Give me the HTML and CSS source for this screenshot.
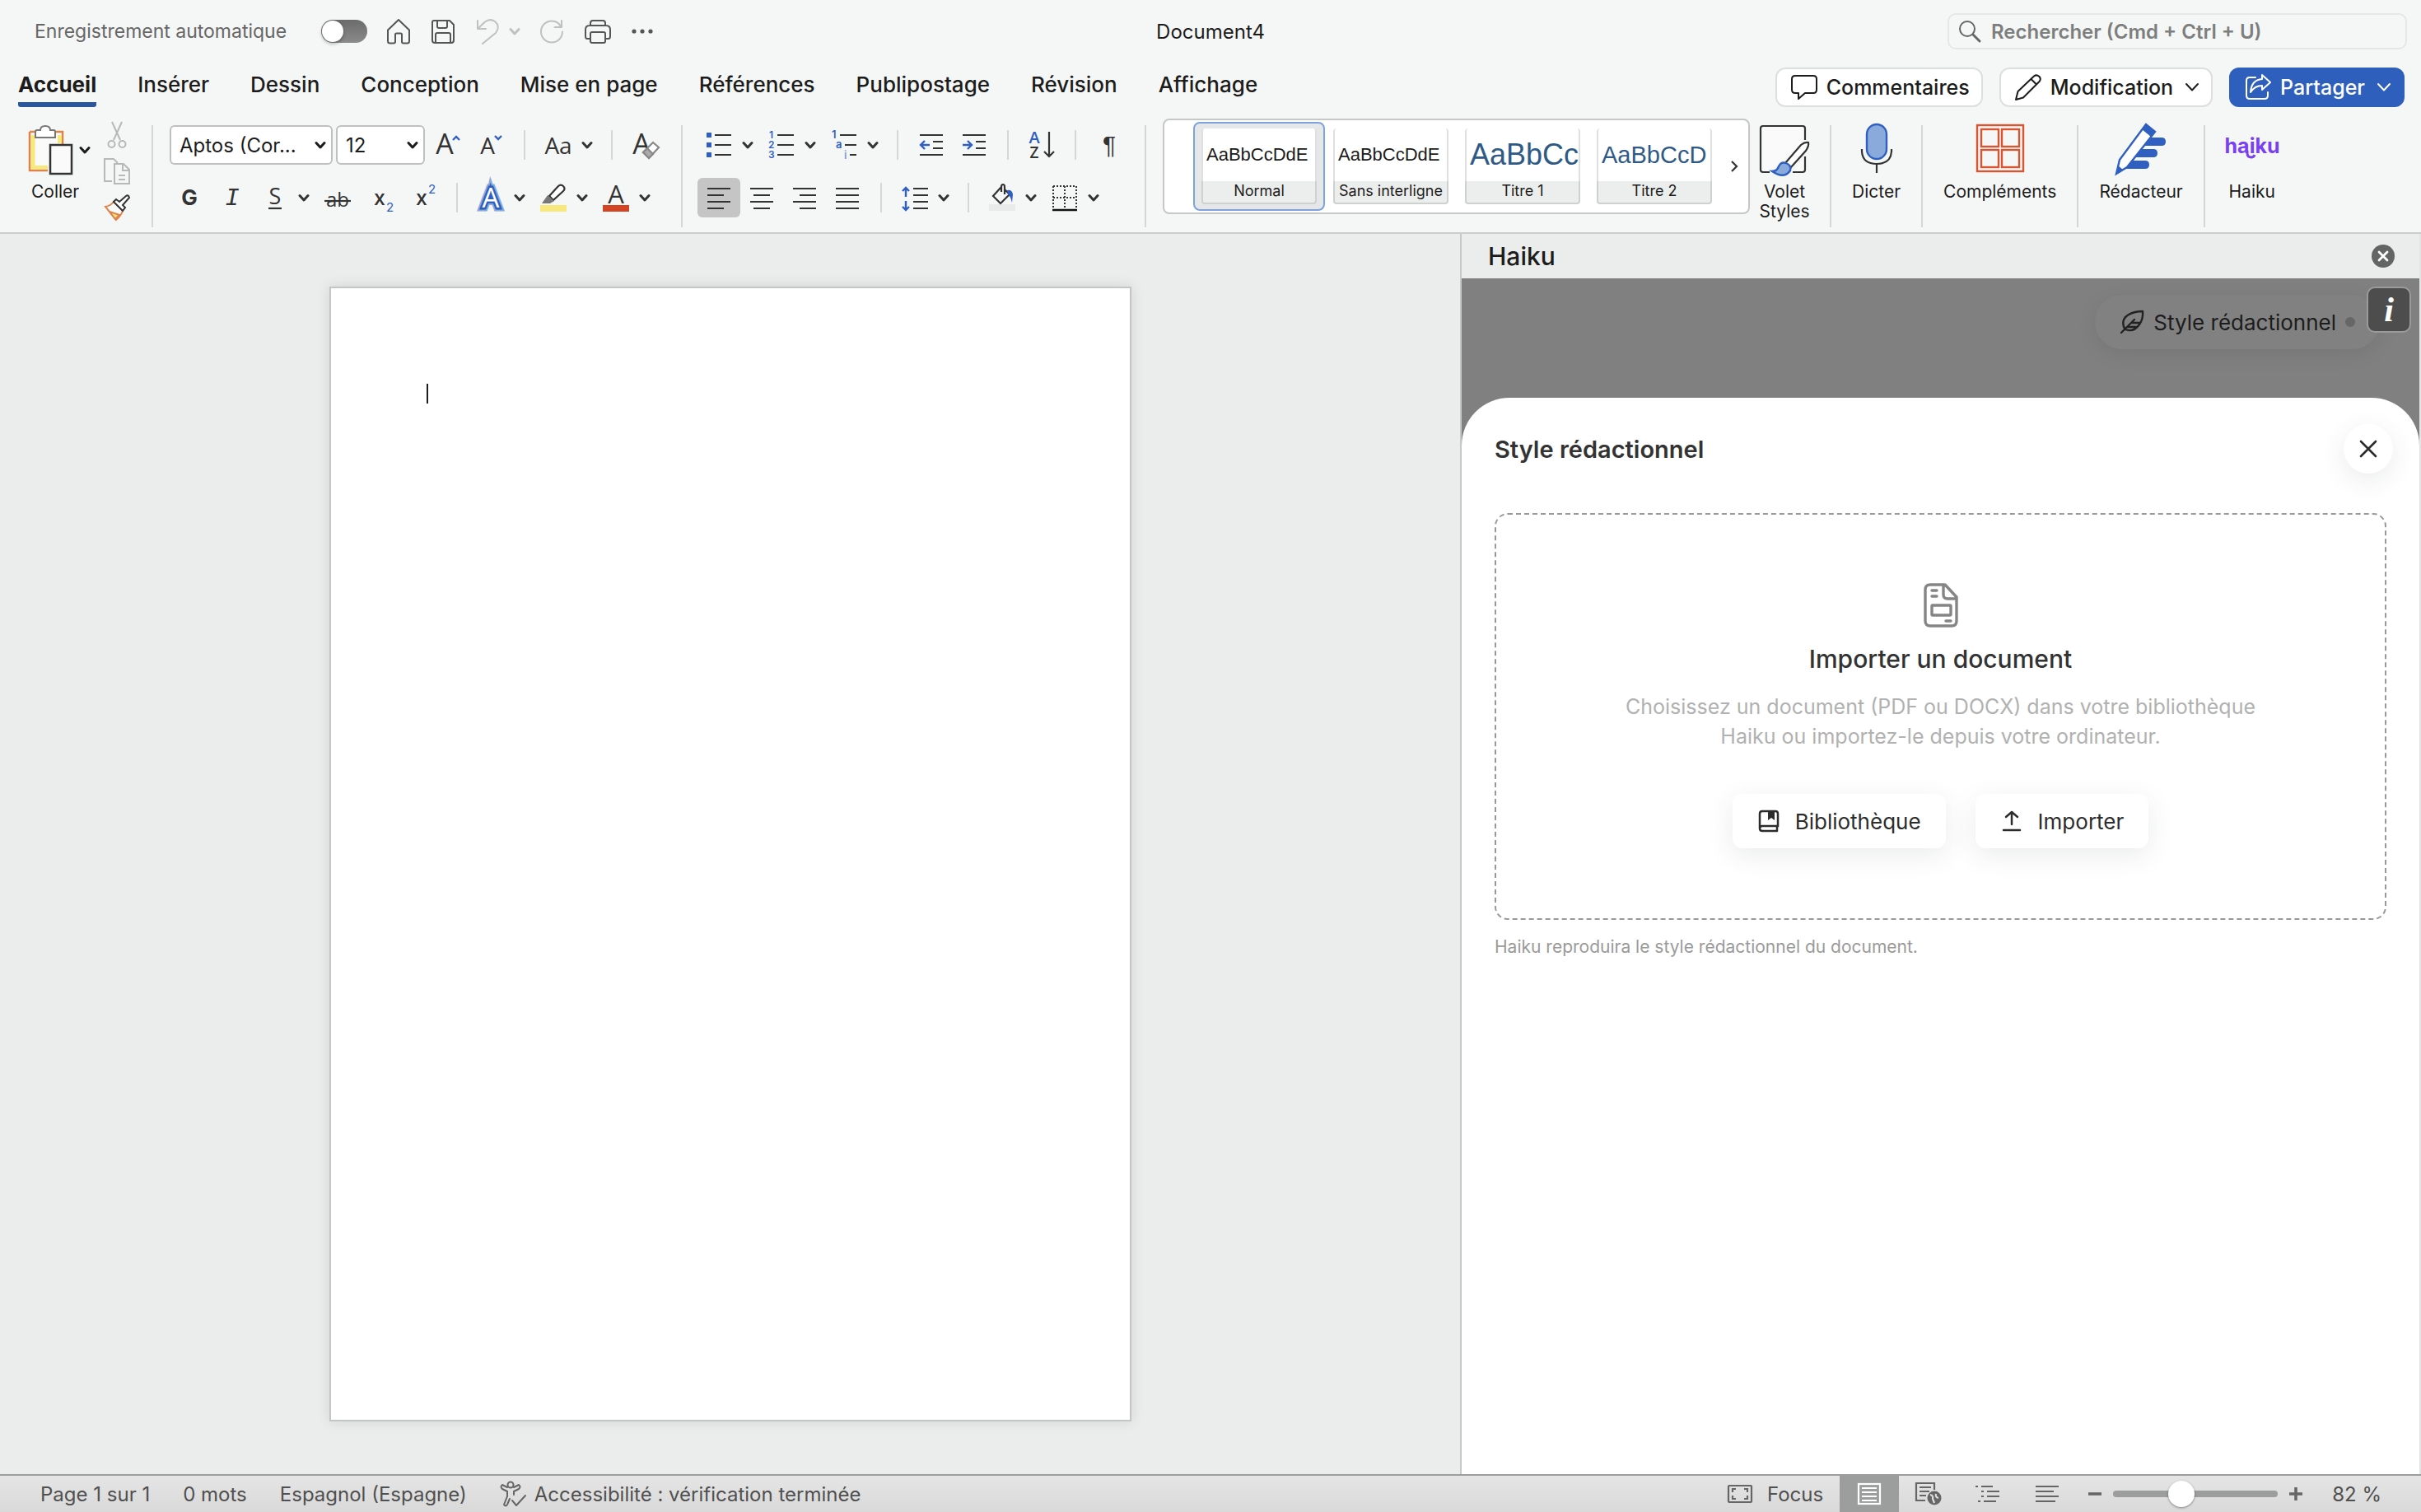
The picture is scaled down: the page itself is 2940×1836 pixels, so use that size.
FILE: index.html
```html
<!DOCTYPE html>
<html lang="fr">
<head>
  <meta charset="UTF-8" />
  <meta name="viewport" content="width=device-width, initial-scale=1.0"/>
  <title>Document4</title>
  <link rel="stylesheet" href="styles.css">
</head>
<body>
  <!-- Shared symbols -->
  <svg class="symbols" aria-hidden="true">
    <symbol id="chevron" viewBox="0 0 14 14"><path d="M2 4.500L7 10L12 4.500" fill="none" stroke="currentColor" stroke-width="3" stroke-linecap="round" stroke-linejoin="round"/></symbol>
    <symbol id="chevron-thin" viewBox="0 0 18 18"><path d="M2 5L9 12.500L16 5" fill="none" stroke="currentColor" stroke-width="2" stroke-linecap="round" stroke-linejoin="round"/></symbol>
  </svg>

  <!-- Title bar -->
  <header class="titlebar">
    <div class="quick">
      <label for="autosave">Enregistrement automatique</label>
      <input type="checkbox" id="autosave" class="toggle" />
      <button class="quick-btn" aria-label="Accueil"><svg width="32" height="32" viewBox="0 0 32 32" class="line"><path d="M3 14.500L16 2L29 14.500V28Q29 30.500 26.500 30.500H22Q20 30.500 20 28.500V20Q20 18.500 18.500 18.500H13.500Q12 18.500 12 20V28.500Q12 30.500 10 30.500H5.500Q3 30.500 3 28Z"/></svg></button>
      <button class="quick-btn" aria-label="Enregistrer"><svg width="32" height="32" viewBox="0 0 32 32" class="line"><path d="M5 3H24L29 8V27Q29 30 26 30H6Q3 30 3 27V5Q3 3 5 3ZM9 3V10Q9 12 11 12H19Q21 12 21 10V3M7 30V20Q7 18 9 18H23Q25 18 25 20V30"/></svg></button>
      <button class="quick-btn off" aria-label="Annuler"><svg width="32" height="32" viewBox="0 0 32 32" class="line"><path d="M4 3V13H14M4 13L13 4.500Q19 0 25 4Q32 10 26 18L10 31"/></svg><svg class="chev" width="14" height="14"><use href="#chevron"/></svg></button>
      <button class="quick-btn off" aria-label="Rétablir"><svg width="32" height="32" viewBox="0 0 32 32" class="line"><path d="M28 3V11H19.500M27.500 11Q24 3.500 16 3.500A13 13 0 1 0 29 16.500"/></svg></button>
      <button class="quick-btn" aria-label="Imprimer"><svg width="36" height="32" viewBox="0 0 36 32" class="line"><path d="M9 9V6Q9 3 12 3H24Q27 3 27 6V9M9 25H5Q3 25 3 22V14Q3 9 8 9H28Q33 9 33 14V22Q33 25 31 25H27M11 17H25Q27 17 27 19V28Q27 30 25 30H11Q9 30 9 28V19Q9 17 11 17Z"/></svg></button>
      <button class="quick-btn" aria-label="Plus"><svg width="28" height="8" viewBox="0 0 28 8" fill="#555"><circle cx="4" cy="4" r="2.600"/><circle cx="14" cy="4" r="2.600"/><circle cx="24" cy="4" r="2.600"/></svg></button>
    </div>
    <h1 class="doc-title">Document4</h1>
    <div class="search">
      <svg width="28" height="28" viewBox="0 0 28 28" class="line"><circle cx="11" cy="11" r="9"/><path d="M18 18L26 26" stroke-width="3"/></svg>
      <input type="text" aria-label="Rechercher" placeholder="Rechercher (Cmd + Ctrl + U)" />
    </div>
  </header>

  <!-- Ribbon tabs -->
  <nav class="tabs">
    <a href="#" class="tab active">Accueil</a>
    <a href="#" class="tab">Insérer</a>
    <a href="#" class="tab">Dessin</a>
    <a href="#" class="tab">Conception</a>
    <a href="#" class="tab">Mise en page</a>
    <a href="#" class="tab">Références</a>
    <a href="#" class="tab">Publipostage</a>
    <a href="#" class="tab">Révision</a>
    <a href="#" class="tab">Affichage</a>
    <div class="tab-actions">
      <button class="action"><svg width="34" height="34" viewBox="0 0 34 34" class="line"><path d="M6 3H28Q32 3 32 7V20Q32 24 28 24H18L10 31V24H6Q2 24 2 20V7Q2 3 6 3Z"/></svg>Commentaires</button>
      <button class="action"><svg width="34" height="34" viewBox="0 0 34 34" class="line"><path d="M2 32L4.500 22L24 3.500Q27 1 30.500 4Q33 7 30.500 10L11 29.500ZM20.500 7L27 13.500"/></svg>Modification<svg class="chev" width="18" height="18"><use href="#chevron-thin"/></svg></button>
      <button class="action primary"><svg width="34" height="34" viewBox="0 0 34 34" class="line"><path d="M14 5H7Q3 5 3 9V27Q3 31 7 31H25Q29 31 29 27V23M22 2L32 11L22 20V15Q13 15 8 23Q9 8 22 7Z"/></svg>Partager<svg class="chev" width="18" height="18"><use href="#chevron-thin"/></svg></button>
    </div>
  </nav>

  <!-- Ribbon -->
  <section class="ribbon">
    <div class="group clipboard">
      <button class="big paste">
        <span class="paste-icon">
          <svg width="54" height="60" viewBox="0 0 54 60"><path d="M2 8H42V24M24 55H2V8" fill="#f9f9f9" stroke="#e0834a" stroke-width="2.500"/><path d="M6 12V51H24M38.500 12V22" fill="none" stroke="#f8e77a" stroke-width="5"/><path d="M9 14H36V22H26V49H9Z" fill="#fafafa"/><path d="M9 15V8Q9 6 11 6H15Q15 1 21 1Q27 1 27 6H31Q33 6 33 8V15Z" fill="#fff" stroke="#777" stroke-width="2"/><rect x="27" y="24" width="26" height="35" fill="#fafafa" stroke="#333" stroke-width="2.500"/></svg>
          <svg class="chev" width="14" height="14"><use href="#chevron"/></svg>
        </span>
        <span class="paste-label">Coller</span>
      </button>
      <div class="stack">
        <button class="small" aria-label="Couper"><svg width="32" height="32" viewBox="0 0 32 32" fill="none" stroke="#b7b8b8" stroke-width="2"><path d="M10 0L20 22M22 0L12 22"/><circle cx="9.500" cy="27" r="4"/><circle cx="22.500" cy="27" r="4"/></svg></button>
        <button class="small" aria-label="Copier"><svg width="32" height="32" viewBox="0 0 32 32" fill="none" stroke="#b7b8b8" stroke-width="2"><path d="M10 28H1V1H12L17 6M13 7H24L31 14V31H13ZM23 7V15H31M18 21H26M18 26H26"/></svg></button>
        <button class="small" aria-label="Reproduire la mise en forme"><svg width="32" height="32" viewBox="0 0 32 32" fill="none" stroke-width="2"><path d="M2 15Q8 14 12 9L23 20Q21 26 15 31Z" fill="#fafafa" stroke="#e0834a"/><path d="M7 21L19 25L14 30Z" fill="#f8e77a" stroke="#e0834a"/><path d="M12 9L15 6L19 9L27 2Q30 0 31 4L23 13L26 16L23 20Z" fill="#fff" stroke="#333"/></svg></button>
      </div>
    </div>

    <div class="divider"></div>

    <div class="group rows">
      <div class="row">
        <span class="select font-name"><select aria-label="Police"><option>Aptos (Cor...</option></select><svg class="chev" width="14" height="14"><use href="#chevron"/></svg></span>
        <span class="select font-size"><select aria-label="Taille"><option>12</option></select><svg class="chev" width="14" height="14"><use href="#chevron"/></svg></span>
        <button class="tool" aria-label="Agrandir la police"><svg width="32" height="32" viewBox="0 0 32 32"><text x="12" y="27" text-anchor="middle" class="glyph letter" font-size="34">A</text><path d="M22 10L26 6L30 10" class="blue"/></svg></button>
        <button class="tool" aria-label="Réduire la police"><svg width="32" height="32" viewBox="0 0 32 32"><text x="12" y="27" text-anchor="middle" class="glyph letter" font-size="28">A</text><path d="M21 5L25 9L29 5" class="blue"/></svg></button>
        <span class="sep"></span>
        <button class="tool" aria-label="Modifier la casse"><svg width="32" height="32" viewBox="0 0 32 32"><text x="16" y="27" text-anchor="middle" class="glyph letter" font-size="28">Aa</text></svg><svg class="chev" width="14" height="14"><use href="#chevron"/></svg></button>
        <span class="sep"></span>
        <button class="tool" aria-label="Effacer la mise en forme"><svg width="32" height="32" viewBox="0 0 32 32"><text x="11" y="27" text-anchor="middle" class="glyph letter" font-size="34">A</text><path d="M13 25L25 13L32 19L20 32Z" fill="#fff" stroke="#888" stroke-width="2.200"/><path d="M13 25L18 20L25 27L20 32Z" fill="#aaa" stroke="#888" stroke-width="2.200"/></svg></button>
      </div>
      <div class="row">
        <button class="tool" aria-label="Gras"><svg width="32" height="32" viewBox="0 0 32 32"><text x="16" y="25" text-anchor="middle" class="glyph" font-size="26" font-weight="700">G</text></svg></button>
        <button class="tool" aria-label="Italique"><svg width="32" height="32" viewBox="0 0 32 32"><text x="16" y="25" text-anchor="middle" class="glyph italic" font-size="29">I</text></svg></button>
        <button class="tool" aria-label="Souligné"><svg width="32" height="32" viewBox="0 0 32 32"><text x="16" y="24" text-anchor="middle" class="glyph letter" font-size="27">S</text><path d="M8 29H24" class="ink"/></svg><svg class="chev" width="14" height="14"><use href="#chevron"/></svg></button>
        <button class="tool" aria-label="Barré"><svg width="32" height="32" viewBox="0 0 32 32"><text x="16" y="27" text-anchor="middle" class="glyph letter" font-size="24">ab</text><path d="M0 20H32" class="ink"/></svg></button>
        <button class="tool" aria-label="Indice"><svg width="32" height="32" viewBox="0 0 32 32"><text x="8" y="25" class="glyph" font-size="25" font-weight="500">x</text><text x="23" y="33" class="glyph tint" font-size="15">2</text></svg></button>
        <button class="tool" aria-label="Exposant"><svg width="32" height="32" viewBox="0 0 32 32"><text x="7" y="25" class="glyph" font-size="25" font-weight="500">x</text><text x="22" y="11" class="glyph tint" font-size="15">2</text></svg></button>
        <span class="sep"></span>
        <button class="tool" aria-label="Effets de texte"><svg width="32" height="32" viewBox="0 0 32 32"><text x="16" y="28" text-anchor="middle" class="letter halo" font-size="33">A</text><text x="16" y="28" text-anchor="middle" class="letter outline" font-size="33">A</text></svg><svg class="chev" width="14" height="14"><use href="#chevron"/></svg></button>
        <button class="tool" aria-label="Surlignage"><svg width="32" height="34" viewBox="0 0 32 34"><path d="M11 15L22 3Q25 0 28 3Q31 6 28 9L16 20Z" fill="#fff" stroke="#333" stroke-width="2.200"/><path d="M9 14L17 21L12 24H2Z" fill="#777"/><rect y="26" width="32" height="8" fill="#f8e77a"/></svg><svg class="chev" width="14" height="14"><use href="#chevron"/></svg></button>
        <button class="tool" aria-label="Couleur de police"><svg width="32" height="34" viewBox="0 0 32 34"><text x="16" y="24" text-anchor="middle" class="glyph letter" font-size="31">A</text><rect y="26" width="32" height="8" fill="#d24424"/></svg><svg class="chev" width="14" height="14"><use href="#chevron"/></svg></button>
      </div>
    </div>

    <div class="divider"></div>

    <div class="group rows">
      <div class="row">
        <button class="tool" aria-label="Puces"><svg width="32" height="32" viewBox="0 0 32 32"><path d="M11 4H31M11 16H31M11 28H31" class="ink"/><path d="M1 1H7V7H1ZM1 13H7V19H1ZM1 25H7V31H1Z" fill="#2f5fc0"/></svg><svg class="chev" width="14" height="14"><use href="#chevron"/></svg></button>
        <button class="tool" aria-label="Numérotation"><svg width="32" height="32" viewBox="0 0 32 32"><path d="M11 4H31M11 16H31M11 28H31" class="ink"/><g class="glyph tint" font-size="12" font-weight="600"><text x="1" y="8">1</text><text x="0" y="20">2</text><text x="0" y="32">3</text></g></svg><svg class="chev" width="14" height="14"><use href="#chevron"/></svg></button>
        <button class="tool" aria-label="Liste à plusieurs niveaux"><svg width="32" height="32" viewBox="0 0 32 32"><path d="M11 4H31M17 16H31M23 28H31" class="ink"/><g class="glyph tint" font-size="13" font-weight="600"><text x="1" y="8">1</text><text x="6" y="20">a</text><text x="16" y="33" opacity=".6">i</text></g></svg><svg class="chev" width="14" height="14"><use href="#chevron"/></svg></button>
        <span class="sep"></span>
        <button class="tool" aria-label="Diminuer le retrait"><svg width="32" height="32" viewBox="0 0 32 32"><path d="M2 4H30M18 12H30M18 20H30M2 28H30" class="ink"/><path d="M14 16H3M8 11L3 16L8 21" class="blue"/></svg></button>
        <button class="tool" aria-label="Augmenter le retrait"><svg width="32" height="32" viewBox="0 0 32 32"><path d="M2 4H30M18 12H30M18 20H30M2 28H30" class="ink"/><path d="M2 16H13M8 11L13 16L8 21" class="blue"/></svg></button>
        <span class="sep"></span>
        <button class="tool" aria-label="Trier"><svg width="32" height="34" viewBox="0 0 32 34"><text x="7" y="15" text-anchor="middle" class="letter tint" font-size="20" font-weight="600">A</text><text x="7" y="33" text-anchor="middle" class="letter glyph" font-size="19" font-weight="600">Z</text><path d="M25 1V31M19 25L25 31L31 25" class="ink"/></svg></button>
        <span class="sep"></span>
        <button class="tool" aria-label="Afficher tout"><svg width="32" height="32" viewBox="0 0 32 32"><text x="16" y="26" text-anchor="middle" class="glyph pilcrow" font-size="30">¶</text></svg></button>
      </div>
      <div class="row">
        <button class="tool on" aria-label="Aligner à gauche"><svg width="32" height="32" viewBox="0 0 32 32"><path d="M2 5H30M2 13H22M2 21H30M2 29H22" class="ink"/></svg></button>
        <button class="tool" aria-label="Centrer"><svg width="32" height="32" viewBox="0 0 32 32"><path d="M2 5H30M6 13H26M2 21H30M6 29H26" class="ink"/></svg></button>
        <button class="tool" aria-label="Aligner à droite"><svg width="32" height="32" viewBox="0 0 32 32"><path d="M2 5H30M10 13H30M2 21H30M10 29H30" class="ink"/></svg></button>
        <button class="tool" aria-label="Justifier"><svg width="32" height="32" viewBox="0 0 32 32"><path d="M2 5H30M2 13H30M2 21H30M2 29H30" class="ink"/></svg></button>
        <span class="sep"></span>
        <button class="tool" aria-label="Interligne"><svg width="32" height="32" viewBox="0 0 32 32"><path d="M14 5H32M14 13H32M14 21H32M14 29H32" class="ink"/><path d="M5 15V4M1 8L5 4L9 8M5 20V31M1 27L5 31L9 27" class="blue"/></svg><svg class="chev" width="14" height="14"><use href="#chevron"/></svg></button>
        <span class="sep"></span>
        <button class="tool" aria-label="Trame de fond"><svg width="32" height="32" viewBox="0 0 32 32"><rect y="24" width="32" height="8" fill="#e9ebea"/><path d="M15 3L5 14L14 23L25 12L19 6M15 9V3Q15 0 17 0Q19 0 19 3V12" fill="none" stroke="#333" stroke-width="2.200"/><path d="M22 7Q28 6 29 12L28 22Q26 14 23 12Z" fill="#2f5fc0"/></svg><svg class="chev" width="14" height="14"><use href="#chevron"/></svg></button>
        <button class="tool" aria-label="Bordures"><svg width="32" height="32" viewBox="0 0 32 32"><path d="M2 2H30M2 16H30M2 2V28M16 2V28M30 2V28" fill="none" stroke="#333" stroke-width="2" stroke-dasharray="2 2"/><path d="M1 31H31" stroke="#111" stroke-width="2.500"/></svg><svg class="chev" width="14" height="14"><use href="#chevron"/></svg></button>
      </div>
    </div>

    <div class="divider"></div>

    <!-- Styles gallery -->
    <div class="gallery">
      <button class="style-card selected"><span class="preview">AaBbCcDdE</span><span class="style-name">Normal</span></button>
      <button class="style-card"><span class="preview">AaBbCcDdE</span><span class="style-name">Sans interligne</span></button>
      <button class="style-card"><span class="preview heading-1">AaBbCc</span><span class="style-name">Titre 1</span></button>
      <button class="style-card"><span class="preview heading-2">AaBbCcD</span><span class="style-name">Titre 2</span></button>
      <button class="gallery-next" aria-label="Suivant"><svg width="14" height="16" viewBox="0 0 14 16"><path d="M4 2L10 8L4 14" class="ink"/></svg></button>
    </div>

    <button class="big pane-btn">
      <svg width="60" height="62" viewBox="0 0 60 62"><path d="M12 57H4Q1 57 1 54V4Q1 1 4 1H52Q55 1 55 4V18M55 38V54Q55 57 52 57H40" fill="#fafafa" stroke="#333" stroke-width="2.200"/><path d="M31 46L50 24Q55 20 59 21Q60 25 56 31L38 51Z" fill="#fff" stroke="#333" stroke-width="2.200"/><path d="M15 56Q21 56 23 50Q26 44 32 46Q39 49 37 55Q30 66 15 56Z" fill="#8aaadb" stroke="#2f5fc0" stroke-width="2.400"/></svg>
      Volet<br>Styles
    </button>
    <div class="divider"></div>
    <button class="big">
      <svg width="40" height="62" viewBox="0 0 40 62"><rect x="8" y="1" width="24" height="42" rx="12" fill="#8aaadb" stroke="#2f5fc0" stroke-width="2.400"/><path d="M2 31V34Q3 49 20 49Q37 49 38 34V31M20 49V60" class="ink"/></svg>
      Dicter
    </button>
    <div class="divider"></div>
    <button class="big">
      <svg width="60" height="62" viewBox="0 0 60 62" fill="none" stroke="#d65532" stroke-width="2.400"><rect x="2" y="2" width="56" height="56"/><rect x="7" y="7" width="21" height="21"/><rect x="32" y="7" width="21" height="21"/><rect x="7" y="32" width="21" height="21"/><rect x="32" y="32" width="21" height="21"/></svg>
      Compléments
    </button>
    <div class="divider"></div>
    <button class="big">
      <svg width="62" height="62" viewBox="0 0 62 62"><path d="M38 17H56Q61 17 61 22Q61 27 56 27H30ZM28 31H46Q51 31 51 36Q51 41 46 41H20ZM18 45H36Q41 45 41 50Q41 55 36 55H10Z" fill="#2f5fc0"/><path d="M1 61L5 44L37 1L48 10L14 53Z" fill="#fff" stroke="#2f5fc0" stroke-width="2.400"/><path d="M37 1L48 10L43 16L32 7ZM1 61L3 51L9 56Z" fill="#2f5fc0"/></svg>
      Rédacteur
    </button>
    <div class="divider"></div>
    <button class="big">
      <svg width="64" height="62" viewBox="0 0 64 62"><text x="32" y="36" text-anchor="middle" class="logo-text">haiku</text><path d="M26 33V36Q26 41 31 41Q34 41 35 38" fill="none" stroke="#7a3ff0" stroke-width="3"/></svg>
      Haiku
    </button>
  </section>

  <!-- Document and side pane -->
  <main class="workspace">
    <div class="canvas">
      <div class="page"><div class="caret"></div></div>
    </div>

    <aside class="pane">
      <div class="pane-header">
        <h2>Haiku</h2>
        <button class="pane-close" aria-label="Fermer le volet"><svg width="28" height="28" viewBox="0 0 28 28"><circle cx="14" cy="14" r="14" fill="#636564"/><path d="M9 9L19 19M19 9L9 19" stroke="#fff" stroke-width="2.800" stroke-linecap="round"/></svg></button>
      </div>
      <div class="backdrop">
        <button class="pill">
          <svg width="30" height="30" viewBox="0 0 30 30" fill="none" stroke="#222" stroke-width="2.400" stroke-linecap="round" stroke-linejoin="round"><path d="M2 28L18 12M6 23Q1 12 11 6Q18 2 28 2Q29 11 24 18Q17 28 7 24ZM14 16H24M10 21H20"/></svg>
          Style rédactionnel
          <span class="dot"></span>
        </button>
        <button class="info" aria-label="Informations">i</button>
      </div>
      <div class="sheet">
        <div class="sheet-header">
          <h3>Style rédactionnel</h3>
          <button class="sheet-close" aria-label="Fermer"><svg width="22" height="22" viewBox="0 0 22 22"><path d="M2 2L20 20M20 2L2 20" stroke="#2c2c2c" stroke-width="2.600" stroke-linecap="round"/></svg></button>
        </div>
        <div class="dropzone">
          <svg width="42" height="54" viewBox="0 0 42 54" fill="none" stroke="#858585" stroke-width="3.400" stroke-linejoin="round" stroke-linecap="round"><path d="M8 2H26L40 17V46Q40 52 34 52H8Q2 52 2 46V8Q2 2 8 2ZM24 3V14Q24 19 29 19H39M10 9H16M10 16H16M27 46H33"/><rect x="10" y="27" width="23" height="12" rx="1"/></svg>
          <h4>Importer un document</h4>
          <p>Choisissez un document (PDF ou DOCX) dans votre bibliothèque<br>Haiku ou importez-le depuis votre ordinateur.</p>
          <div class="dropzone-actions">
            <button class="soft"><svg width="28" height="28" viewBox="0 0 28 28"><path d="M6 2H22Q25 2 25 5V20H6Q3 20 3 23V5Q3 2 6 2ZM3 23Q3 26 6 26H24M24 20V26" fill="none" stroke="#2c2c2c" stroke-width="2.500" stroke-linecap="round"/><path d="M13 2H21V13L17 10L13 13Z" fill="#2c2c2c"/></svg>Bibliothèque</button>
            <button class="soft"><svg width="28" height="28" viewBox="0 0 28 28"><path d="M14 18V3M7 9L14 3L21 9M4 25H24" fill="none" stroke="#2c2c2c" stroke-width="2.500" stroke-linecap="round" stroke-linejoin="round"/></svg>Importer</button>
          </div>
        </div>
        <p class="hint">Haiku reproduira le style rédactionnel du document.</p>
      </div>
    </aside>
  </main>

  <!-- Status bar -->
  <footer class="status">
    <span>Page 1 sur 1</span>
    <span>0 mots</span>
    <span>Espagnol (Espagne)</span>
    <span class="with-icon"><svg width="32" height="32" viewBox="0 0 32 32" fill="none" stroke="#666" stroke-width="2" stroke-linecap="round" stroke-linejoin="round"><circle cx="13" cy="5" r="3.500"/><path d="M9 8L3 5Q0 7 3 10L9 13V19L5 29Q7 32 9 29L12 22M17 8L23 5Q26 7 23 10L17 13V17M15 24L20 30L31 18"/></svg>Accessibilité : vérification terminée</span>
    <div class="status-right">
      <button class="focus"><svg width="30" height="24" viewBox="0 0 30 24" fill="none" stroke="#666" stroke-width="2.200"><rect x="1" y="2" width="28" height="20" rx="1"/><path d="M6 10V6H10M20 6H24V10M24 14V18H20M10 18H6V14"/></svg>Focus</button>
      <button class="view on" aria-label="Page"><svg width="28" height="28" viewBox="0 0 28 28" fill="none" stroke="#fff" stroke-width="2.200"><rect x="1" y="2" width="26" height="24"/><path d="M5 7H23M5 12H23M5 17H23M5 22H23"/></svg></button>
      <button class="view" aria-label="Web"><svg width="32" height="30" viewBox="0 0 32 30" fill="none" stroke="#666" stroke-width="2.200"><path d="M12 23H1V2H23V10M5 7H19M5 12H17M5 17H13"/><circle cx="23" cy="20" r="8.500" fill="#666" stroke="none"/><path d="M18 16Q22 17 21 21L23 26M25 15Q24 19 28 20" stroke="#ddd"/></svg></button>
      <button class="view" aria-label="Plan"><svg width="32" height="28" viewBox="0 0 32 28" stroke="#666" stroke-width="2.200"><path d="M1 5H4M8 5H22M8 11H11M15 11H30M8 17H11M15 17H30M4 23H7M11 23H26"/></svg></button>
      <button class="view" aria-label="Brouillon"><svg width="32" height="28" viewBox="0 0 32 28" stroke="#666" stroke-width="2.200"><path d="M2 5H30M2 11H24M2 17H30M2 23H26"/></svg></button>
      <button class="zoom-btn" aria-label="Zoom arrière"><svg width="16" height="16" viewBox="0 0 16 16" stroke="#666" stroke-width="3.600"><path d="M0 8H16"/></svg></button>
      <input type="range" class="zoom" min="0" max="100" value="40" aria-label="Zoom" />
      <button class="zoom-btn" aria-label="Zoom avant"><svg width="16" height="16" viewBox="0 0 16 16" stroke="#666" stroke-width="3.600"><path d="M0 8H16M8 0V16"/></svg></button>
      <span class="zoom-value">82 %</span>
    </div>
  </footer>
</body>
</html>
```

FILE: styles.css
```css
/* Base Styles */
* {
  box-sizing: border-box;
}
body {
  margin: 0;
  height: 100vh;
  display: flex;
  flex-direction: column;
  font-family: Inter, "Liberation Sans", sans-serif;
  font-size: 22px;
  color: #1c1c1c;
  background: #f5f7f6;
  overflow: hidden;
}
h1, h2, h3, h4, p {
  margin: 0;
}
button, input, select {
  font: inherit;
  color: inherit;
  margin: 0;
}
button {
  padding: 0;
  border: none;
  background: none;
  cursor: pointer;
}
svg {
  display: block;
  flex: none;
  overflow: visible;
}
.symbols {
  position: absolute;
  width: 0;
  height: 0;
}
.line {
  fill: none;
  stroke: currentColor;
  stroke-width: 2;
  stroke-linecap: round;
  stroke-linejoin: round;
}
.ink {
  fill: none;
  stroke: #333;
  stroke-width: 2.2;
}
.blue {
  fill: none;
  stroke: #2f5fc0;
  stroke-width: 2.4;
}

/* Letters used inside ribbon icons */
.glyph {
  fill: #333;
}
.tint {
  fill: #2f5fc0;
}
.letter {
  font-family: "Open Sans", "Noto Sans", sans-serif;
}
.italic {
  font-family: "Liberation Mono", monospace;
  font-style: italic;
}
.pilcrow {
  font-family: "Liberation Sans", sans-serif;
}
.halo {
  fill: #8aaadb;
  stroke: #8aaadb;
  stroke-width: 9;
}
.outline {
  fill: #fff;
  stroke: #2f5fc0;
  stroke-width: 5;
  paint-order: stroke;
}

/* Title bar */
.titlebar {
  display: grid;
  grid-template-columns: 1fr auto 1fr;
  align-items: center;
  height: 76px;
  padding: 0 17px;
}
.quick {
  display: flex;
  align-items: center;
  gap: 22px;
  padding-left: 25px;
  color: #666;
  font-size: 23px;
}
.toggle {
  appearance: none;
  width: 56px;
  height: 28px;
  margin-left: 20px;
  border-radius: 14px;
  background: linear-gradient(#6b6b6b, #8b8b8b);
  display: flex;
}
.toggle::before {
  content: "";
  width: 26px;
  height: 26px;
  margin: 1px;
  border-radius: 50%;
  background: #fff;
  box-shadow: 0 2px 4px rgba(0, 0, 0, 0.3);
}
.quick-btn {
  display: flex;
  align-items: center;
  gap: 10px;
  color: #555;
}
.quick-btn.off {
  color: #bfc0c0;
}
.doc-title {
  font-size: 24px;
  font-weight: 400;
}
.search {
  justify-self: end;
  display: flex;
  align-items: center;
  gap: 10px;
  width: 558px;
  height: 44px;
  padding: 0 11px;
  border: 2px solid #e5e7e6;
  border-radius: 10px;
  color: #666;
}
.search input {
  flex: 1;
  border: none;
  outline: none;
  background: none;
  font-weight: 600;
  font-size: 24px;
}
.search input::placeholder {
  color: #7d7f7e;
}

/* Tabs */
.tabs {
  display: flex;
  align-items: flex-start;
  gap: 50px;
  height: 68px;
  padding: 6px 20px 0 22px;
}
.tab {
  height: 48px;
  padding-top: 4px;
  line-height: 34px;
  font-size: 26px;
  font-weight: 500;
  color: #1c1c1c;
  text-decoration: none;
}
.tab.active {
  font-weight: 700;
  border-bottom: 6px solid #2b579a;
  border-radius: 3px;
}
.tab-actions {
  display: flex;
  gap: 20px;
  margin-left: auto;
}
.action {
  display: flex;
  align-items: center;
  gap: 10px;
  height: 48px;
  padding: 0 14px 0 16px;
  border: 2px solid #dddfde;
  border-radius: 12px;
  background: #fff;
  font-size: 25px;
  font-weight: 500;
}
.action .chev {
  margin-left: 4px;
}
.action.primary {
  border-color: #2f5fbd;
  background: #2f5fbd;
  color: #fff;
}

/* Ribbon */
.ribbon {
  display: flex;
  align-items: flex-start;
  height: 140px;
  border-bottom: 2px solid #cbcdcc;
}
.divider {
  width: 2px;
  height: 124px;
  margin-top: 8px;
  background: #d5d7d6;
}
.clipboard {
  display: flex;
  gap: 16px;
  padding: 0 26px 0 34px;
}
.stack {
  display: flex;
  flex-direction: column;
  gap: 4px;
}
.small {
  height: 40px;
}
.big {
  display: flex;
  flex-direction: column;
  align-items: center;
  padding: 6px 25px 0;
  line-height: 24px;
  font-size: 21px;
}
.big > svg,
.paste-icon {
  margin-bottom: 9px;
}
.paste {
  align-items: flex-start;
  padding: 8px 0 0;
}
.paste-icon {
  display: flex;
  align-items: center;
  gap: 8px;
}
.paste-label {
  padding-left: 4px;
}
.pane-btn {
  width: 60px;
  margin: 0 25px 0 12px;
  padding: 8px 0 0;
}
.pane-btn > svg {
  margin-bottom: 7px;
}
.rows {
  display: flex;
  flex-direction: column;
  gap: 16px;
  padding: 8px 17px 0 18px;
}
.row {
  display: flex;
  align-items: center;
  height: 48px;
}
.tool {
  display: flex;
  align-items: center;
  gap: 12px;
  height: 48px;
  padding: 0 8px 0 10px;
  color: #333;
}
.tool svg:only-child {
  margin-right: 2px;
}
.tool.on {
  border-radius: 6px;
  background: #c4c5c4;
}
.sep {
  width: 2px;
  height: 36px;
  margin: 0 14px;
  background: #d5d7d6;
}
.select {
  display: grid;
  align-items: center;
  margin-left: 2px;
  margin-right: 2px;
}
.select select,
.select .chev {
  grid-area: 1 / 1;
}
.select select {
  appearance: none;
  width: 100%;
  height: 48px;
  padding: 0 30px 0 10px;
  border: 2px solid #bfc1c0;
  border-radius: 6px;
  background: #fff;
  font-size: 24px;
}
.select .chev {
  justify-self: end;
  margin-right: 8px;
  pointer-events: none;
}
.font-name {
  width: 198px;
}
.font-size {
  width: 108px;
}

/* Styles gallery */
.gallery {
  display: flex;
  align-items: center;
  height: 116px;
  margin-left: 20px;
  padding: 0 10px 0 35px;
  border: 2px solid #c6c8c7;
  border-radius: 8px;
  background: #fff;
}
.style-card {
  display: flex;
  flex-direction: column;
  width: 160px;
  height: 108px;
  padding: 6px 8px;
  border: 2px solid transparent;
  border-radius: 8px;
}
.style-card.selected {
  border-color: #7ea3dc;
  background: #e6e7e9;
}
.preview {
  display: flex;
  align-items: center;
  width: 100%;
  height: 64px;
  padding-left: 4px;
  border: 2px solid #dedfde;
  border-width: 0 2px;
  border-radius: 4px 4px 0 0;
  background: #fff;
  font-family: "Liberation Sans", Arial, sans-serif;
  font-size: 22px;
  font-weight: 400;
  overflow: hidden;
}
.heading-1 {
  font-size: 36px;
  color: #2f5a85;
}
.heading-2 {
  font-size: 29px;
  color: #2f5a85;
}
.style-name {
  width: 100%;
  height: 28px;
  border: 2px solid #cfd1d0;
  border-top: none;
  border-radius: 0 0 4px 4px;
  background: #eceeed;
  line-height: 24px;
  font-size: 18px;
  text-align: center;
  white-space: nowrap;
}
.gallery-next {
  padding-left: 10px;
}
.logo-text {
  fill: #7a3ff0;
  font-size: 25px;
  font-weight: 700;
}

/* Workspace */
.workspace {
  flex: 1;
  display: flex;
  min-height: 0;
}
.canvas {
  flex: 1;
  display: flex;
  justify-content: center;
  padding: 64px 0;
  background: #ebedec;
}
.page {
  width: 974px;
  padding: 116px;
  border: 2px solid #c4c5c5;
  background: #fff;
  box-shadow: 0 0 14px rgba(60, 60, 90, 0.15);
}
.caret {
  width: 2px;
  height: 24px;
  background: #1c1c1c;
}

/* Side pane */
.pane {
  display: flex;
  flex-direction: column;
  width: 1167px;
  border-left: 2px solid #c6c8c7;
  border-right: 2px solid #e3e5e4;
  background: #808080;
}
.pane-header {
  display: flex;
  align-items: center;
  justify-content: space-between;
  height: 54px;
  padding: 0 30px 0 32px;
  background: #ebedec;
}
.pane-header h2 {
  font-size: 30px;
  font-weight: 500;
}
.backdrop {
  position: relative;
  display: flex;
  justify-content: flex-end;
  height: 145px;
  padding: 20px 48px 0;
}
.pill {
  display: flex;
  align-items: center;
  gap: 11px;
  height: 66px;
  padding: 0 30px;
  border-radius: 33px;
  background: #818181;
  box-shadow: 0 6px 24px rgba(0, 0, 0, 0.08);
  font-size: 26px;
}
.dot {
  width: 12px;
  height: 12px;
  border-radius: 50%;
  background: #666;
}
.info {
  position: absolute;
  top: 10px;
  right: 10px;
  width: 54px;
  height: 56px;
  border: 2px solid #9a9a9a;
  border-radius: 10px;
  background: #4d4d4d;
  color: #fff;
  font-family: "Liberation Serif", serif;
  font-size: 42px;
  line-height: 48px;
  font-style: italic;
  font-weight: 700;
}
.sheet {
  flex: 1;
  padding: 32px 40px 0;
  border-radius: 58px 58px 0 0;
  background: #fff;
}
.sheet-header {
  display: flex;
  align-items: center;
  justify-content: space-between;
  margin-bottom: 48px;
}
.sheet-header h3 {
  font-size: 29px;
  font-weight: 600;
  color: #333;
}
.sheet-close {
  display: flex;
  align-items: center;
  justify-content: center;
  width: 60px;
  height: 60px;
  margin-right: -8px;
  border-radius: 50%;
  background: #fff;
  box-shadow: 0 8px 30px rgba(40, 60, 50, 0.1);
}
.dropzone {
  display: flex;
  flex-direction: column;
  align-items: center;
  height: 494px;
  padding-top: 83px;
  border: 2px dashed #999;
  border-radius: 16px;
}
.dropzone h4 {
  margin-top: 20px;
  line-height: 36px;
  font-size: 30px;
  font-weight: 500;
  color: #333;
}
.dropzone p {
  margin-top: 22px;
  line-height: 36px;
  font-size: 25px;
  color: #b1b1b1;
  text-align: center;
}
.dropzone-actions {
  display: flex;
  gap: 36px;
  margin-top: 52px;
}
.soft {
  display: flex;
  align-items: center;
  gap: 18px;
  height: 66px;
  padding: 0 30px;
  border-radius: 12px;
  background: #fff;
  box-shadow: 0 8px 32px rgba(40, 60, 50, 0.1);
  font-size: 26px;
  color: #2c2c2c;
}
.hint {
  margin-top: 18px;
  line-height: 30px;
  font-size: 21px;
  color: #9a9a9a;
}

/* Status bar */
.status {
  display: flex;
  align-items: center;
  gap: 40px;
  height: 46px;
  padding-left: 49px;
  border-top: 2px solid #9b9e9c;
  background: linear-gradient(#e5e5e5, #d9d9d9);
  font-size: 24px;
  color: #505050;
}
.with-icon {
  display: flex;
  align-items: center;
  gap: 10px;
}
.status-right {
  display: flex;
  align-items: center;
  height: 100%;
  margin-left: auto;
  padding-right: 48px;
}
.focus {
  display: flex;
  align-items: center;
  gap: 18px;
  margin-right: 20px;
}
.view {
  display: flex;
  align-items: center;
  justify-content: center;
  width: 72px;
  height: 100%;
}
.view.on {
  background: #9c9e9d;
}
.zoom-btn {
  margin: 0 14px;
}
.zoom {
  appearance: none;
  width: 200px;
  height: 32px;
  background: none;
}
.zoom::-webkit-slider-runnable-track {
  height: 8px;
  border-radius: 4px;
  background: #9c9e9d;
}
.zoom::-webkit-slider-thumb {
  appearance: none;
  width: 32px;
  height: 32px;
  margin-top: -12px;
  border-radius: 50%;
  background: #fff;
  box-shadow: 0 1px 3px rgba(0, 0, 0, 0.4);
}
.zoom-value {
  margin-left: 22px;
}
```
